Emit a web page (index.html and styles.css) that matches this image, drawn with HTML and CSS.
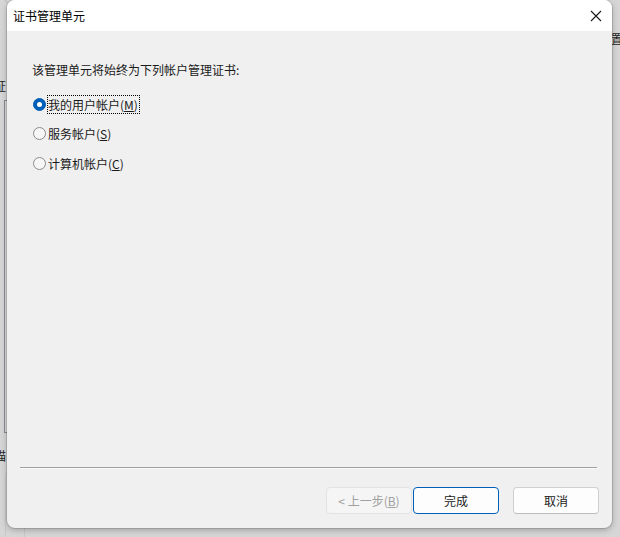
FILE: index.html
```html
<!DOCTYPE html>
<html lang="zh-CN">
<head>
    <meta charset="UTF-8">
    <meta name="viewport" content="width=device-width, initial-scale=1.0">
    <title>证书管理单元</title>
    <link rel="stylesheet" href="styles.css">
</head>
<body>
    <!-- 背后的窗口 -->
    <div class="desk">
        <div class="bg-top">ぐ证书管理器</div>
        <div class="bg-char bg-char-1">证</div>
        <div class="bg-box"></div>
        <div class="bg-char bg-char-2">描</div>
        <div class="bg-box-2"></div>
        <div class="bg-right">置主</div>
    </div>

    <!-- 对话框 -->
    <div class="dialog">
        <div class="titlebar">
            <span class="title">证书管理单元</span>
            <span class="close">
                <svg width="12" height="12" viewBox="0 0 12 12">
                    <path d="M1 1 L11 11 M11 1 L1 11" stroke="#1a1a1a" stroke-width="1.1" fill="none"/>
                </svg>
            </span>
        </div>

        <div class="content">
            <p class="prompt">该管理单元将始终为下列帐户管理证书:</p>
            <div class="options">
                <label class="option">
                    <span class="radio checked"></span>
                    <span class="label focus">我的用户帐户(<u>M</u>)</span>
                </label>
                <label class="option">
                    <span class="radio"></span>
                    <span class="label">服务帐户(<u>S</u>)</span>
                </label>
                <label class="option">
                    <span class="radio"></span>
                    <span class="label">计算机帐户(<u>C</u>)</span>
                </label>
            </div>
        </div>

        <div class="separator"></div>

        <div class="footer">
            <button class="btn disabled">&lt; 上一步(<u>B</u>)</button>
            <button class="btn primary">完成</button>
            <button class="btn cancel">取消</button>
        </div>
    </div>
</body>
</html>
```

FILE: styles.css
```css
/* General */
* {
    box-sizing: border-box;
}

body {
    margin: 0;
    width: 620px;
    height: 537px;
    overflow: hidden;
    font-family: "Noto Sans CJK SC", "Noto Sans", sans-serif;
    font-size: 12px;
    color: #1a1a1a;
    background-color: #d6d6d6;
    position: relative;
}

/* Background window */
.desk {
    position: absolute;
    inset: 0;
    overflow: hidden;
}

.bg-top {
    position: absolute;
    left: 2px;
    top: -9px;
    font-size: 12px;
    color: #c4c4c4;
    white-space: nowrap;
}

.bg-char {
    position: absolute;
    left: -6px;
    font-size: 12px;
    line-height: 14px;
    color: #222;
}

.bg-char-1 {
    top: 79px;
}

.bg-char-2 {
    top: 449px;
}

.bg-box {
    position: absolute;
    left: 4px;
    top: 100px;
    width: 20px;
    height: 333px;
    border: 1px solid #8a8c94;
    background-color: #dcdcdc;
}

.bg-box-2 {
    position: absolute;
    left: 5px;
    top: 471px;
    width: 20px;
    height: 80px;
    border: 1px solid #c8c8c8;
    border-radius: 4px;
}

.bg-right {
    position: absolute;
    left: 611px;
    top: 32px;
    font-size: 12px;
    line-height: 14px;
    color: #222;
    white-space: nowrap;
}

/* Dialog */
.dialog {
    position: absolute;
    left: 7px;
    top: 0;
    width: 605px;
    height: 528px;
    background-color: #f0f0f0;
    border-radius: 8px;
    overflow: hidden;
    display: flex;
    flex-direction: column;
    box-shadow: 0 0 0 1px rgba(0, 0, 0, 0.12), 0 2px 6px rgba(0, 0, 0, 0.25);
}

.titlebar {
    height: 31px;
    background-color: #fff;
    display: flex;
    align-items: center;
    justify-content: space-between;
    padding: 0 10px 0 6px;
}

.title {
    font-size: 12px;
    line-height: 16px;
    color: #000;
}

.close {
    display: flex;
    width: 12px;
    height: 12px;
}

/* Content */
.content {
    flex: 1;
    padding: 31px 0 0 25px;
}

.prompt {
    margin: 0;
    line-height: 16px;
}

.options {
    display: flex;
    flex-direction: column;
    gap: 9.5px;
    margin-top: 16px;
}

.option {
    display: flex;
    align-items: center;
    height: 20px;
    gap: 1px;
    padding-left: 1px;
}

.radio {
    width: 13px;
    height: 13px;
    border-radius: 50%;
    border: 1px solid #8b8b8b;
    background-color: #f6f6f6;
    position: relative;
}

.radio.checked {
    border-color: #005fb8;
    background-color: #005fb8;
}

.radio.checked::after {
    content: "";
    position: absolute;
    left: 3px;
    top: 3px;
    width: 5px;
    height: 5px;
    border-radius: 50%;
    background-color: #fff;
}

.label {
    line-height: 17px;
    padding: 0 1px 0 0;
    border: 1px dotted transparent;
}

.label.focus {
    border-color: #000;
}

/* Separator */
.separator {
    margin: 0 15px 0 13px;
    border-top: 1px solid #a0a0a0;
    border-bottom: 1px solid #fafafa;
}

/* Footer */
.footer {
    display: flex;
    justify-content: flex-end;
    padding: 18px 13px 14px 0;
}

.btn {
    width: 86px;
    height: 27px;
    font-family: inherit;
    font-size: 12px;
    color: #1a1a1a;
    background-color: #fdfdfd;
    border: 1px solid #d0d0d0;
    border-bottom-color: #bdbdbd;
    border-radius: 4px;
    padding: 0;
}

.btn.disabled {
    color: #a0a0a0;
    background-color: #f5f5f5;
    border-color: #e2e2e2;
}

.btn.primary {
    margin-left: 1px;
    border: 1px solid #005fb8;
}

.btn.cancel {
    margin-left: 14px;
}
```
